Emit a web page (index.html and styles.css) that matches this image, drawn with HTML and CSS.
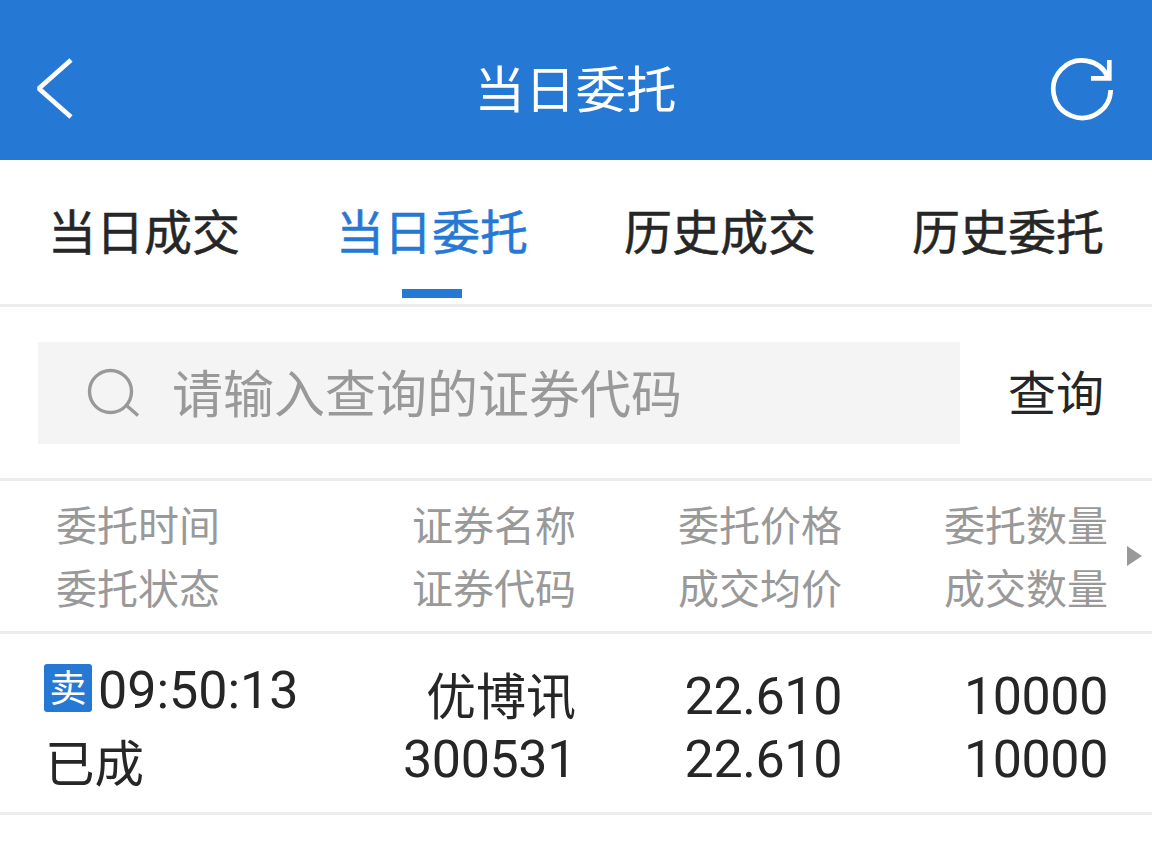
FILE: index.html
```html
<!DOCTYPE html>
<html lang="zh-CN">
<head>
  <meta charset="UTF-8" />
  <meta name="viewport" content="width=device-width, initial-scale=1.0"/>
  <title>当日委托</title>
  <link rel="stylesheet" href="styles.css">
</head>
<body>
  <header class="header">
    <svg class="back" viewBox="0 0 40 64"><path d="M37 3L4.800 31.500L37 60"/></svg>
    <h1>当日委托</h1>
    <svg class="refresh" viewBox="0 0 68 68"><path d="M62.700 35A28.700 28.700 0 1 1 60 22M43 23.300H61.300V5"/></svg>
  </header>

  <nav class="tabs">
    <a class="tab">当日成交</a>
    <a class="tab active">当日委托</a>
    <a class="tab">历史成交</a>
    <a class="tab">历史委托</a>
  </nav>

  <div class="search">
    <div class="search-box">
      <svg class="search-icon" viewBox="0 0 54 50"><circle cx="24.500" cy="23.500" r="21"/><path d="M40 37L52 47.500"/></svg>
      <span>请输入查询的证券代码</span>
    </div>
    <button class="query">查询</button>
  </div>

  <div class="row row-head">
    <div class="col"><span>委托时间</span><span>委托状态</span></div>
    <div class="col"><span>证券名称</span><span>证券代码</span></div>
    <div class="col"><span>委托价格</span><span>成交均价</span></div>
    <div class="col"><span>委托数量</span><span>成交数量</span></div>
    <svg class="more" viewBox="0 0 15 20"><path d="M0 0L15 10L0 20Z"/></svg>
  </div>

  <div class="row row-data">
    <div class="col">
      <div class="time"><i class="badge">卖</i><span class="num">09:50:13</span></div>
      <span class="status">已成</span>
    </div>
    <div class="col"><span class="name">优博讯</span><span class="num">300531</span></div>
    <div class="col"><span class="num">22.610</span><span class="num">22.610</span></div>
    <div class="col"><span class="num">10000</span><span class="num">10000</span></div>
  </div>
</body>
</html>
```

FILE: styles.css
```css
* { box-sizing: border-box; margin: 0; padding: 0; }
body {
  font-family: "Noto Sans CJK SC", sans-serif;
  background: #fff;
  color: #262626;
  height: 845px;
  overflow: hidden;
}
svg {
  display: block;
  fill: none;
}
.header {
  height: 160px;
  padding: 18px 36px 0 34px;
  display: flex;
  align-items: center;
  justify-content: space-between;
  background: #2678d5;
  color: #fff;
}
.header svg {
  stroke: #fff;
  stroke-width: 4.7;
}
.header h1 {
  font-size: 50.5px;
  font-weight: 400;
  line-height: 60px;
  margin-left: 29px;
  padding-bottom: 6px;
}
.back {
  width: 40px;
  height: 64px;
  stroke-linejoin: bevel;
}
.refresh { width: 68px; height: 68px; }
.tabs {
  height: 147px;
  display: flex;
  border-bottom: 3px solid #ededed;
}
.tab {
  flex: 1;
  display: flex;
  flex-direction: column;
  align-items: center;
  padding-top: 39px;
  font-size: 48px;
  line-height: 60px;
  -webkit-text-stroke: 0.5px currentColor;
}
.tab.active { color: #2678d5; }
.tab.active::after {
  content: "";
  width: 60px;
  height: 9px;
  margin-top: 30px;
  background: #2678d5;
}
.search {
  height: 174px;
  padding: 35px 0 0 38px;
  display: flex;
  border-bottom: 3px solid #ededed;
}
.search-box {
  width: 922px;
  height: 102px;
  padding-left: 48px;
  display: flex;
  align-items: center;
  background: #f4f4f4;
  color: #999;
  font-size: 51px;
  line-height: 60px;
}
.search-box span { padding-bottom: 4px; }
.search-icon {
  width: 54px;
  height: 50px;
  margin-right: 32px;
  stroke: #999;
  stroke-width: 3.4;
}
.query {
  flex: 1;
  height: 102px;
  padding-bottom: 6px;
  border: none;
  background: none;
  color: #262626;
  font: inherit;
  font-size: 48px;
}
.row {
  display: grid;
  grid-template-columns: 266px 266px 266px 266px 44px;
  padding-left: 44px;
  border-bottom: 3px solid #ededed;
}
.col {
  display: flex;
  flex-direction: column;
  align-items: flex-end;
}
.col:first-child { align-items: flex-start; }
.row-head {
  height: 153px;
  padding-top: 11px;
  font-size: 41px;
  line-height: 63px;
  color: #999;
}
.row-head .col:first-child { padding-left: 12px; }
.more {
  width: 15px;
  height: 20px;
  margin: 54px 0 0 19px;
}
.more path { fill: #999; }
.row-data {
  height: 181px;
  padding-top: 31px;
  font-size: 50px;
  line-height: 63px;
}
.row-data .col:first-child { margin-top: -1px; }
.num {
  font-family: Roboto, sans-serif;
  font-size: 52px;
  letter-spacing: -0.4px;
}
.name {
  height: 63px;
  line-height: 56px;
}
.time {
  height: 48px;
  display: flex;
  align-items: center;
}
.time .num {
  padding-top: 5px;
  letter-spacing: 0;
}
.badge {
  width: 48px;
  height: 48px;
  margin-right: 6px;
  border-radius: 3px;
  background: #2678d5;
  color: #fff;
  font-size: 37px;
  font-style: normal;
  line-height: 44px;
  text-align: center;
}
.status {
  margin-top: 17px;
  padding-left: 1px;
  font-size: 49.5px;
}
```
